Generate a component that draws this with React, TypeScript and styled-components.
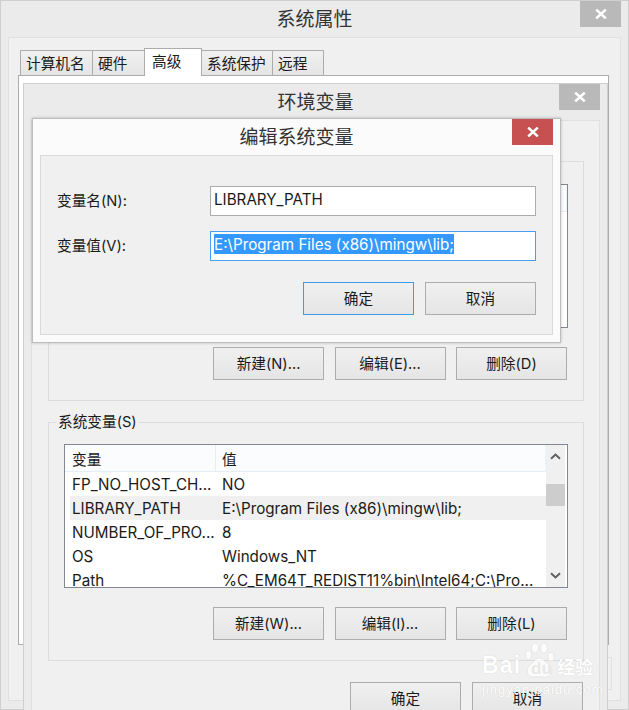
import React from "react";
import styled, { createGlobalStyle } from "styled-components";

const Global = createGlobalStyle`
  html, body { margin: 0; padding: 0; background: #ececec; }
  * { box-sizing: border-box; }
`;

const font = `"Noto Sans CJK SC", sans-serif`;
const latin = `"Inter", "Noto Sans CJK SC", sans-serif`;

const Desktop = styled.div`
  position: relative;
  width: 629px;
  height: 710px;
  overflow: hidden;
  font-family: ${latin};
  font-size: 14.67px;
  color: #1a1a1a;
  background: #ececec;
`;

const Win = styled.section<{ $left: number; $top: number; $w: number; $h: number; $front?: boolean }>`
  position: absolute;
  left: ${(p) => p.$left}px;
  top: ${(p) => p.$top}px;
  width: ${(p) => p.$w}px;
  height: ${(p) => p.$h}px;
  display: flex;
  flex-direction: column;
  background: ${(p) => (p.$front ? "#fbfbfb" : "#ebebeb")};
  border: 1px solid ${(p) => (p.$front ? "#bdbdbd" : "#cfcfcf")};
  box-shadow: ${(p) => (p.$front ? "0 0 3px rgba(0,0,0,.22)" : "none")};
`;

const TitleBar = styled.header`
  position: relative;
  flex: none;
  height: 36px;
  padding-bottom: 2px;
  display: flex;
  align-items: center;
  justify-content: center;
`;

const TitleText = styled.h1`
  margin: 0;
  font-family: ${font};
  font-size: 19px;
  font-weight: 400;
  line-height: 24px;
  color: #333;
`;

const CloseBtn = styled.div<{ $danger?: boolean }>`
  position: absolute;
  top: 0;
  right: 7px;
  width: 41px;
  height: 26px;
  display: flex;
  align-items: center;
  justify-content: center;
  background: ${(p) => (p.$danger ? "#c75050" : "#b9b9b9")};
`;

const CloseIcon = () => (
  <svg width="12" height="10" viewBox="0 0 12 10">
    <path d="M1.2 .6 L10.8 9.4 M10.8 .6 L1.2 9.4" stroke="#fff" strokeWidth="2.5" fill="none" />
  </svg>
);

const SysPanel = styled.div`
  flex: none;
  margin: 0 7px;
  width: 613px;
  height: 664px;
  background: #f0f0f0;
  border: 1px solid #e0e0e0;
  padding: 10px 0 0 9px;
`;

const TabBar = styled.div`
  position: relative;
  z-index: 1;
  height: 28px;
  margin-left: 2px;
  margin-bottom: -1px;
  display: flex;
  align-items: flex-end;
`;

const Tab = styled.div<{ $active?: boolean; $w: number }>`
  flex: none;
  width: ${(p) => p.$w}px;
  height: ${(p) => (p.$active ? 28 : 26)}px;
  margin-left: -1px;
  padding: ${(p) => (p.$active ? "0 0 3px 7px" : "0 0 0 5px")};
  display: flex;
  align-items: center;
  font-family: ${font};
  font-size: 14.67px;
  line-height: 20px;
  border: 1px solid #acacac;
  border-bottom: ${(p) => (p.$active ? "none" : "1px solid #acacac")};
  background: ${(p) => (p.$active ? "#fff" : "linear-gradient(#f0f0f0, #e5e5e5)")};
  &:first-child { margin-left: 0; }
`;

const TabPage = styled.div`
  width: 591px;
  height: 570px;
  background: #fff;
  border: 1px solid #acacac;
`;

const GhostRow = styled.div`
  display: flex;
  justify-content: flex-end;
  width: 594px;
  margin-top: 12px;
`;

const GhostButton = styled.div`
  width: 60px;
  height: 33px;
  border: 1px solid #e2e2e2;
`;

const EnvPanel = styled.div`
  flex: none;
  margin: 0 7px;
  height: 620px;
  background: #f0f0f0;
  border: 1px solid #e0e0e0;
  padding: 40px 15px 0 16px;
  display: flex;
  flex-direction: column;
`;

const Group = styled.div<{ $top: number; $gap?: number }>`
  position: relative;
  flex: none;
  width: 536px;
  margin-top: ${(p) => p.$gap ?? 0}px;
  padding: ${(p) => p.$top}px 15px 20px;
  border: 1px solid #dcdcdc;
  display: flex;
  flex-direction: column;
  gap: 19px;
`;

const GroupLabel = styled.span`
  position: absolute;
  left: 7px;
  top: -11px;
  padding: 0 2px;
  line-height: 20px;
  background: #f0f0f0;
`;

const ListBox = styled.div`
  height: 144px;
  display: flex;
  background: #fff;
  border: 1px solid #828790;
  overflow: hidden;
`;

const ListMain = styled.div`
  flex: 1;
  min-width: 0;
`;

const ListHead = styled.div`
  height: 27px;
  display: grid;
  grid-template-columns: 150px 1fr;
  background: #fbfcfe;
  border-bottom: 1px solid #e5eef6;
  border-right: 1px solid #eef3f8;
`;

const HeadCell = styled.div<{ $second?: boolean }>`
  padding-left: ${(p) => (p.$second ? 6 : 7)}px;
  font-family: ${font};
  line-height: 27px;
  font-size: 14.67px;
  border-left: ${(p) => (p.$second ? "1px solid #e5eef6" : "none")};
`;

const Row = styled.div<{ $selected?: boolean }>`
  margin-left: 5px;
  height: 24px;
  display: grid;
  grid-template-columns: 145px 1fr;
  align-items: center;
  background: ${(p) => (p.$selected ? "#f0f0f0" : "transparent")};
`;

const Cell = styled.div<{ $second?: boolean }>`
  padding-left: ${(p) => (p.$second ? 7 : 2)}px;
  font-size: 15.2px;
  white-space: nowrap;
  line-height: 25px;
`;

const Scroll = styled.div`
  flex: none;
  width: 19px;
  margin-right: 2px;
  display: flex;
  flex-direction: column;
  background: #f0f0f0;
`;

const ArrowSlot = styled.div<{ $end?: boolean }>`
  flex: none;
  height: 23px;
  margin-top: ${(p) => (p.$end ? "auto" : 0)};
  display: flex;
  align-items: center;
  justify-content: center;
`;

const Thumb = styled.div`
  flex: none;
  height: 22px;
  margin-top: 16px;
  background: #cdcdcd;
`;

const Chevron = ({ down }: { down?: boolean }) => (
  <svg width="11" height="7" viewBox="0 0 11 7">
    <path
      d={down ? "M1 1.2 L5.5 5.4 L10 1.2" : "M1 5.8 L5.5 1.6 L10 5.8"}
      stroke="#606060"
      strokeWidth="2"
      fill="none"
    />
  </svg>
);

const ButtonRow = styled.div<{ $gap: number; $top?: number; $flush?: boolean }>`
  display: flex;
  justify-content: flex-end;
  gap: ${(p) => p.$gap}px;
  padding-right: ${(p) => (p.$flush ? 0 : 1)}px;
  margin-top: ${(p) => p.$top ?? 0}px;
  width: ${(p) => (p.$flush ? "479px" : "auto")};
`;

const Button = styled.div<{ $primary?: boolean }>`
  flex: none;
  width: 111px;
  height: 33px;
  display: flex;
  align-items: center;
  justify-content: center;
  line-height: 20px;
  background: linear-gradient(#f0f0f0, #e5e5e5);
  border: 1px solid ${(p) => (p.$primary ? "#3c9bf0" : "#acacac")};
`;

const DialogPanel = styled.div`
  flex: none;
  margin: 0 7px;
  height: 180px;
  background: #f0f0f0;
  border: 1px solid #d9d9d9;
  padding: 30px 16px 0 16px;
`;

const Form = styled.div`
  display: grid;
  grid-template-columns: 153px 326px;
  grid-auto-rows: 30px;
  row-gap: 15px;
  align-items: center;
`;

const FieldLabel = styled.label`
  line-height: 20px;
`;

const Field = styled.div<{ $focus?: boolean }>`
  height: 30px;
  padding: 2px 0 0 3px;
  background: #fff;
  border: 1px solid ${(p) => (p.$focus ? "#4a9df0" : "#acacac")};
  white-space: nowrap;
`;

const FieldText = styled.span`
  display: inline-block;
  height: 20px;
  font-size: 15.2px;
  line-height: 21px;
`;

const Selected = styled(FieldText)`
  color: #fff;
  background: #3399ff;
`;

const Mark = styled.div`
  position: absolute;
  left: 482px;
  top: 641px;
  width: 116px;
  height: 60px;
  pointer-events: none;
  color: #fff;
  text-shadow: 0 0 1px rgba(120, 120, 120, 0.35);
`;

const MarkLine = styled.div`
  display: flex;
  align-items: flex-end;
  height: 37px;
`;

const MarkBai = styled.span`
  font-family: "Liberation Sans", sans-serif;
  font-weight: 700;
  font-size: 23px;
  line-height: 26px;
  width: 43px;
  letter-spacing: 1.2px;
`;

const Paw = styled.div`
  position: relative;
  flex: none;
  width: 30px;
  height: 37px;
`;

const MarkDu = styled.span`
  position: absolute;
  left: 6px;
  top: 19px;
  font-family: "Liberation Sans", sans-serif;
  font-weight: 700;
  font-size: 17px;
  line-height: 18px;
  color: #e8e8e8;
  text-shadow: none;
`;

const MarkCn = styled.span`
  margin-left: 2px;
  font-family: "Noto Sans CJK SC", sans-serif;
  font-size: 18px;
  line-height: 24px;
  font-weight: 700;
`;

const MarkUrl = styled.div`
  margin-top: 5px;
  font-family: "Liberation Sans", sans-serif;
  font-size: 13.5px;
  line-height: 14px;
  letter-spacing: 0.75px;
  white-space: nowrap;
`;

const rows = [
  ["FP_NO_HOST_CH...", "NO"],
  ["LIBRARY_PATH", "E:\\Program Files (x86)\\mingw\\lib;"],
  ["NUMBER_OF_PRO...", "8"],
  ["OS", "Windows_NT"],
  ["Path", "%C_EM64T_REDIST11%bin\\Intel64;C:\\Pro..."],
];

export default function App() {
  return (
    <Desktop>
      <Global />
      <Win $left={0} $top={0} $w={629} $h={710}>
        <TitleBar>
          <TitleText>系统属性</TitleText>
          <CloseBtn><CloseIcon /></CloseBtn>
        </TitleBar>
        <SysPanel>
          <TabBar>
            <Tab $w={73}>计算机名</Tab>
            <Tab $w={53}>硬件</Tab>
            <Tab $w={58} $active>高级</Tab>
            <Tab $w={72}>系统保护</Tab>
            <Tab $w={52}>远程</Tab>
          </TabBar>
          <TabPage />
          <GhostRow><GhostButton /></GhostRow>
        </SysPanel>
      </Win>

      <Win $left={23} $top={83} $w={585} $h={660}>
        <TitleBar>
          <TitleText>环境变量</TitleText>
          <CloseBtn><CloseIcon /></CloseBtn>
        </TitleBar>
        <EnvPanel>
          <Group $top={22}>
            <ListBox>
              <ListMain>
                <ListHead />
              </ListMain>
            </ListBox>
            <ButtonRow $gap={10.5}>
              <Button>新建(N)...</Button>
              <Button>编辑(E)...</Button>
              <Button>删除(D)</Button>
            </ButtonRow>
          </Group>
          <Group $top={21} $gap={21}>
            <GroupLabel>系统变量(S)</GroupLabel>
            <ListBox>
              <ListMain>
                <ListHead>
                  <HeadCell>变量</HeadCell>
                  <HeadCell $second>值</HeadCell>
                </ListHead>
                {rows.map(([name, value], i) => (
                  <Row key={name} $selected={i === 1}>
                    <Cell>{name}</Cell>
                    <Cell $second>{value}</Cell>
                  </Row>
                ))}
              </ListMain>
              <Scroll>
                <ArrowSlot><Chevron /></ArrowSlot>
                <Thumb />
                <ArrowSlot $end><Chevron down /></ArrowSlot>
              </Scroll>
            </ListBox>
            <ButtonRow $gap={10.5}>
              <Button>新建(W)...</Button>
              <Button>编辑(I)...</Button>
              <Button>删除(L)</Button>
            </ButtonRow>
          </Group>
          <ButtonRow $gap={11} $top={21}>
            <Button>确定</Button>
            <Button>取消</Button>
          </ButtonRow>
        </EnvPanel>
      </Win>

      <Win $left={32} $top={118} $w={529} $h={225} $front>
        <TitleBar>
          <TitleText>编辑系统变量</TitleText>
          <CloseBtn $danger><CloseIcon /></CloseBtn>
        </TitleBar>
        <DialogPanel>
          <Form>
            <FieldLabel>变量名(N):</FieldLabel>
            <Field><FieldText>LIBRARY_PATH</FieldText></Field>
            <FieldLabel>变量值(V):</FieldLabel>
            <Field $focus><Selected>E:\Program Files (x86)\mingw\lib;</Selected></Field>
          </Form>
          <ButtonRow $gap={11} $top={21} $flush>
            <Button $primary>确定</Button>
            <Button>取消</Button>
          </ButtonRow>
        </DialogPanel>
      </Win>

      <Mark>
        <MarkLine>
          <MarkBai>Bai</MarkBai>
          <Paw>
            <svg width="30" height="37" viewBox="0 0 30 37">
              <g fill="#fff" fillOpacity=".7" stroke="#bbb" strokeOpacity=".4" strokeWidth=".6">
                <ellipse cx="3.5" cy="14" rx="3" ry="4.5" />
                <ellipse cx="10" cy="7" rx="3.4" ry="5" />
                <ellipse cx="19" cy="7" rx="3.4" ry="5" />
                <ellipse cx="26" cy="16" rx="3" ry="4.5" />
                <path d="M14 17 C19 17 20 21 24 24 C29 28 27 36 20 36 C17 36 12 35 9 36 C2 36 0 29 5 24 C9 21 10 17 14 17 Z" />
              </g>
            </svg>
            <MarkDu>du</MarkDu>
          </Paw>
          <MarkCn>经验</MarkCn>
        </MarkLine>
        <MarkUrl>jingyan.baidu.com</MarkUrl>
      </Mark>
    </Desktop>
  );
}
